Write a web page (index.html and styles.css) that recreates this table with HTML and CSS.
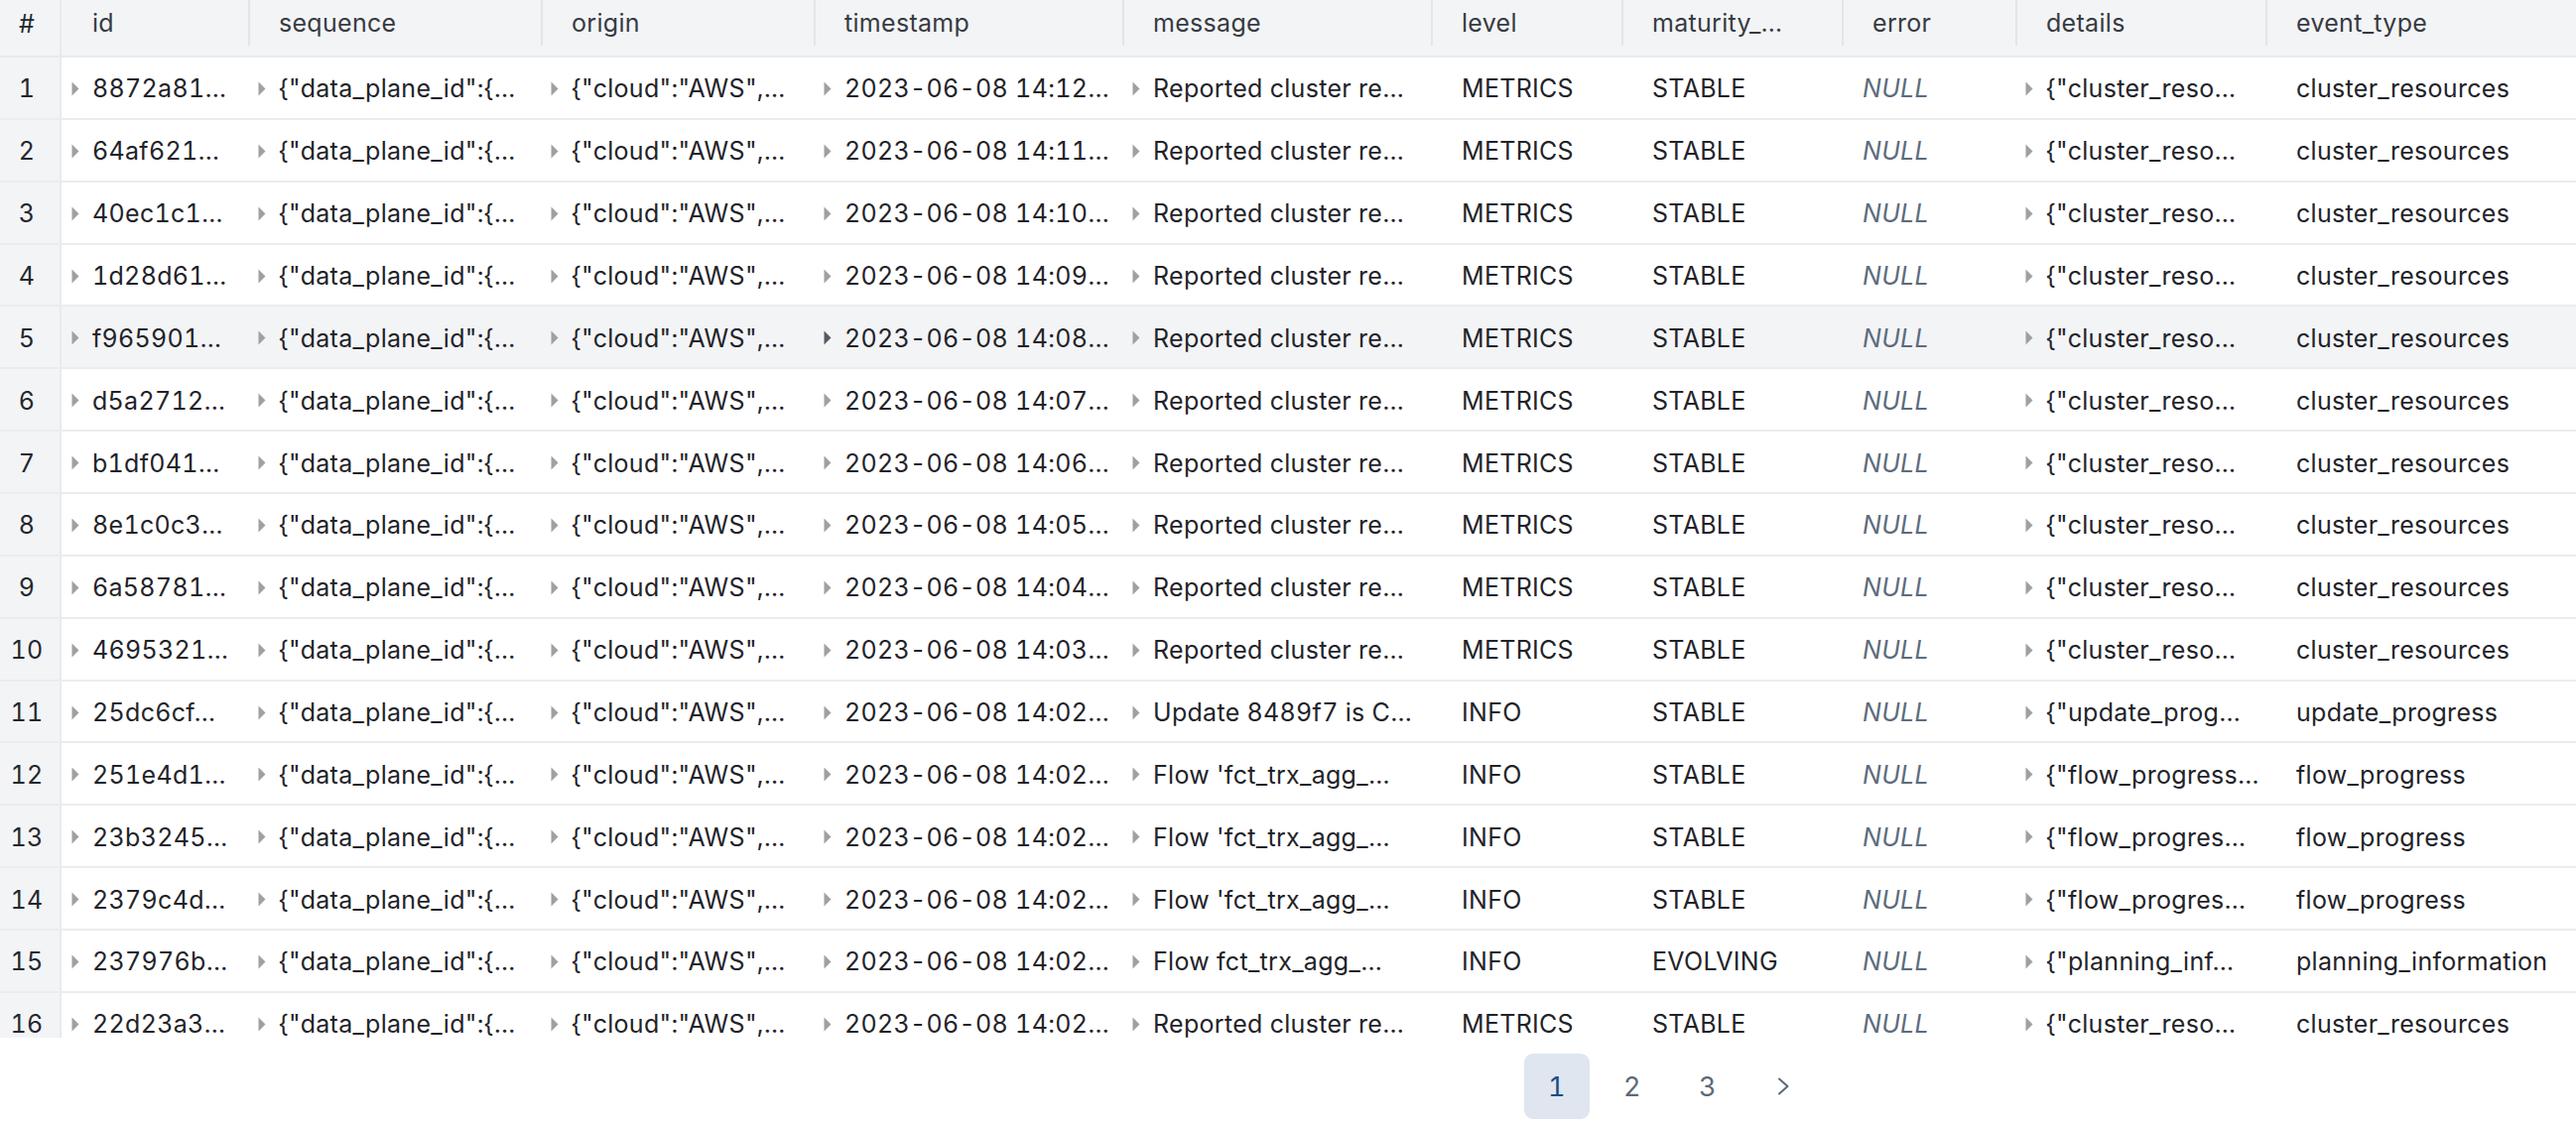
FILE: index.html
```html
<!DOCTYPE html>
<html lang="en">
<head>
<meta charset="utf-8">
<title>event log</title>
<link rel="stylesheet" href="styles.css">
</head>
<body>
<div class="page">
  <div class="table-wrap">
    <div class="row head">
      <div class="cell num">#</div>
      <div class="cell th">id</div>
      <div class="cell th sep">sequence</div>
      <div class="cell th sep">origin</div>
      <div class="cell th sep">timestamp</div>
      <div class="cell th sep">message</div>
      <div class="cell th sep">level</div>
      <div class="cell th sep">maturity_…</div>
      <div class="cell th sep">error</div>
      <div class="cell th sep">details</div>
      <div class="cell th sep">event_type</div>
    </div>
    <div id="body"></div>
  </div>
  <nav class="pager">
    <span class="page-btn active">1</span>
    <span class="page-btn">2</span>
    <span class="page-btn">3</span>
    <span class="page-btn"><svg class="chev" width="14" height="18" viewBox="0 0 14 18"><polyline points="3,1.5 11.5,9 3,16.5" fill="none" stroke="currentColor" stroke-width="2" stroke-linecap="round" stroke-linejoin="round"/></svg></span>
  </nav>
</div>
<script src="app.js"></script>
</body>
</html>
```

FILE: app.js
```js
const rows = [
  ["8872a81…","14:12…","Reported cluster re…","METRICS","STABLE","{\"cluster_reso…","cluster_resources"],
  ["64af621…","14:11…","Reported cluster re…","METRICS","STABLE","{\"cluster_reso…","cluster_resources"],
  ["40ec1c1…","14:10…","Reported cluster re…","METRICS","STABLE","{\"cluster_reso…","cluster_resources"],
  ["1d28d61…","14:09…","Reported cluster re…","METRICS","STABLE","{\"cluster_reso…","cluster_resources"],
  ["f965901…","14:08…","Reported cluster re…","METRICS","STABLE","{\"cluster_reso…","cluster_resources"],
  ["d5a2712…","14:07…","Reported cluster re…","METRICS","STABLE","{\"cluster_reso…","cluster_resources"],
  ["b1df041…","14:06…","Reported cluster re…","METRICS","STABLE","{\"cluster_reso…","cluster_resources"],
  ["8e1c0c3…","14:05…","Reported cluster re…","METRICS","STABLE","{\"cluster_reso…","cluster_resources"],
  ["6a58781…","14:04…","Reported cluster re…","METRICS","STABLE","{\"cluster_reso…","cluster_resources"],
  ["4695321…","14:03…","Reported cluster re…","METRICS","STABLE","{\"cluster_reso…","cluster_resources"],
  ["25dc6cf…","14:02…","Update 8489f7 is C…","INFO","STABLE","{\"update_prog…","update_progress"],
  ["251e4d1…","14:02…","Flow 'fct_trx_agg_…","INFO","STABLE","{\"flow_progress…","flow_progress"],
  ["23b3245…","14:02…","Flow 'fct_trx_agg_…","INFO","STABLE","{\"flow_progres…","flow_progress"],
  ["2379c4d…","14:02…","Flow 'fct_trx_agg_…","INFO","STABLE","{\"flow_progres…","flow_progress"],
  ["237976b…","14:02…","Flow fct_trx_agg_…","INFO","EVOLVING","{\"planning_inf…","planning_information"],
  ["22d23a3…","14:02…","Reported cluster re…","METRICS","STABLE","{\"cluster_reso…","cluster_resources"]
];
const caret = '<svg class="caret" width="8" height="15" viewBox="0 0 8 15"><path d="M0.5 0.5 L7.5 7.5 L0.5 14.5 Z"/></svg>';
function esc(s){return s.replace(/&/g,"&amp;").replace(/</g,"&lt;").replace(/"/g,"&quot;");}
function exp(t){return '<div class="cell exp">'+caret+'<span class="txt">'+esc(t)+'</span></div>';}
function plain(t,cls){return '<div class="cell plain'+(cls?' '+cls:'')+'"><span class="txt">'+esc(t)+'</span></div>';}
const body = document.getElementById("body");
let html = "";
rows.forEach((r,i)=>{
  html += '<div class="row'+(i===4?' hover':'')+'">'
    + '<div class="cell num">'+(i+1)+'</div>'
    + exp(r[0])
    + exp('{"data_plane_id":{…')
    + exp('{"cloud":"AWS",…')
    + exp('2023-06-08 '+r[1])
    + exp(r[2])
    + plain(r[3])
    + plain(r[4])
    + plain('NULL','null')
    + exp(r[5])
    + plain(r[6])
    + '</div>';
});
body.innerHTML = html;
```

FILE: styles.css
```css
html, body {
  margin: 0;
  padding: 0;
  background: #ffffff;
}
body {
  font-family: Inter, "Noto Sans", "Liberation Sans", sans-serif;
  font-size: 25px;
  letter-spacing: 0.3px;
  font-variant-numeric: tabular-nums;
  color: #1f2329;
}
.page {
  width: 2596px;
}
.table-wrap {
  height: 1046px;
  overflow: hidden;
}
.row {
  display: grid;
  grid-template-columns: 62px 188px 295px 275px 311px 311px 192px 222px 175px 252px 313px;
  height: 62.86px;
  box-sizing: border-box;
  border-bottom: 2px solid #ececef;
}
.row.head {
  height: 58px;
  background: #f3f4f6;
  border-bottom: 2px solid #e9eaed;
}
.row.hover {
  background: #f3f4f6;
}
.cell {
  display: flex;
  align-items: center;
  overflow: hidden;
  white-space: nowrap;
  min-width: 0;
  padding-top: 2px;
  box-sizing: border-box;
}
.cell .txt {
  overflow: hidden;
  text-overflow: ellipsis;
}
.num {
  justify-content: center;
  padding-right: 6px;
  background: #f3f4f6;
  border-right: 2px solid #e9eaed;
  color: #23272d;
}
.head .num {
  align-items: flex-start;
  padding-top: 9px;
}
.th {
  position: relative;
  align-items: flex-start;
  padding-top: 8px;
  padding-left: 31px;
  color: #363b42;
}
.th.sep::before {
  content: "";
  position: absolute;
  left: 0;
  top: 0;
  width: 2px;
  height: 46px;
  background: #e3e5e8;
}
.exp {
  padding-left: 10px;
}
.caret {
  flex: none;
  fill: #a0a0a0;
  margin-right: 13px;
}
.row.hover .exp:nth-child(5) .caret {
  fill: #555b63;
}
.plain {
  padding-left: 31px;
}
.plain.null {
  padding-left: 21px;
  font-style: italic;
  color: #5d6b7c;
}
.pager {
  display: flex;
  gap: 10px;
  margin-top: 16px;
  padding-left: 1536px;
  height: 66px;
}
.page-btn {
  width: 66px;
  height: 66px;
  border-radius: 9px;
  display: flex;
  align-items: center;
  justify-content: center;
  font-size: 27px;
  color: #5c6979;
}
.page-btn.active {
  background: #dfe6f0;
  color: #1d4d80;
}
.chev {
  display: block;
}
```
